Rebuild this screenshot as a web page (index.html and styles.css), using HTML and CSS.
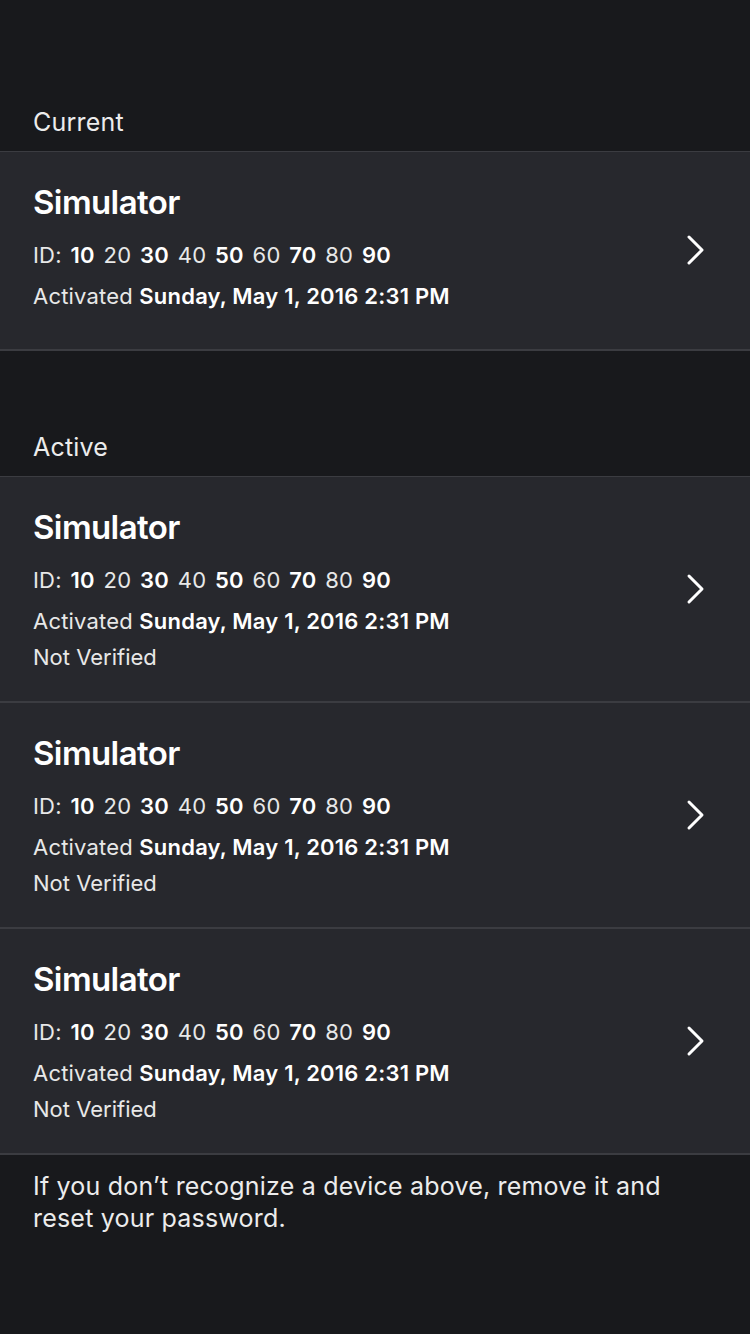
FILE: index.html
```html
<!DOCTYPE html>
<html>
<head>
<meta charset="utf-8">
<link rel="stylesheet" href="styles.css">
</head>
<body>
<div class="page">
  <section class="group group-current">
    <h2 class="group-title">Current</h2>
    <div class="list">
      <div class="card card-current">
        <div class="info">
          <div class="name">Simulator</div>
          <div class="line line-id">ID: <b>10</b> 20 <b>30</b> 40 <b>50</b> 60 <b>70</b> 80 <b>90</b></div>
          <div class="line">Activated <b>Sunday, May 1, 2016 2:31 PM</b></div>
        </div>
        <svg class="chev" width="20" height="32" viewBox="0 0 20 32"><path d="M3 3 L16 16 L3 29" fill="none" stroke="#fff" stroke-width="3" stroke-linecap="round" stroke-linejoin="round"/></svg>
      </div>
    </div>
  </section>

  <section class="group group-active">
    <h2 class="group-title">Active</h2>
    <div class="list">
      <div class="card">
        <div class="info">
          <div class="name">Simulator</div>
          <div class="line line-id">ID: <b>10</b> 20 <b>30</b> 40 <b>50</b> 60 <b>70</b> 80 <b>90</b></div>
          <div class="line">Activated <b>Sunday, May 1, 2016 2:31 PM</b></div>
          <div class="line status">Not Verified</div>
        </div>
        <svg class="chev" width="20" height="32" viewBox="0 0 20 32"><path d="M3 3 L16 16 L3 29" fill="none" stroke="#fff" stroke-width="3" stroke-linecap="round" stroke-linejoin="round"/></svg>
      </div>
      <div class="card">
        <div class="info">
          <div class="name">Simulator</div>
          <div class="line line-id">ID: <b>10</b> 20 <b>30</b> 40 <b>50</b> 60 <b>70</b> 80 <b>90</b></div>
          <div class="line">Activated <b>Sunday, May 1, 2016 2:31 PM</b></div>
          <div class="line status">Not Verified</div>
        </div>
        <svg class="chev" width="20" height="32" viewBox="0 0 20 32"><path d="M3 3 L16 16 L3 29" fill="none" stroke="#fff" stroke-width="3" stroke-linecap="round" stroke-linejoin="round"/></svg>
      </div>
      <div class="card">
        <div class="info">
          <div class="name">Simulator</div>
          <div class="line line-id">ID: <b>10</b> 20 <b>30</b> 40 <b>50</b> 60 <b>70</b> 80 <b>90</b></div>
          <div class="line">Activated <b>Sunday, May 1, 2016 2:31 PM</b></div>
          <div class="line status">Not Verified</div>
        </div>
        <svg class="chev" width="20" height="32" viewBox="0 0 20 32"><path d="M3 3 L16 16 L3 29" fill="none" stroke="#fff" stroke-width="3" stroke-linecap="round" stroke-linejoin="round"/></svg>
      </div>
    </div>
    <p class="footer">If you don’t recognize a device above, remove it and reset your password.</p>
  </section>
</div>
</body>
</html>
```

FILE: styles.css
```css
html, body {
  margin: 0;
  padding: 0;
  background: #18191c;
}
body {
  font-family: Inter, "Noto Sans", sans-serif;
  color: #ffffff;
  width: 750px;
  height: 1334px;
  overflow: hidden;
}
.page {
  display: flex;
  flex-direction: column;
}
.group-title {
  margin: 0;
  font-size: 25px;
  font-weight: 400;
  letter-spacing: 0.2px;
  line-height: 32px;
  color: #ececec;
  padding: 0 33px 13px;
}
.group-current {
  padding-top: 106px;
}
.group-active {
  padding-top: 80px;
}
.list {
  border-top: 1px solid #3b3c41;
}
.card {
  display: flex;
  align-items: center;
  justify-content: space-between;
  background: #27282d;
  border-bottom: 2px solid #3b3c41;
  padding: 28px 44px 29px 33px;
}
.card-current .info {
  padding-bottom: 9px;
}
.info {
  display: flex;
  flex-direction: column;
}
.name {
  font-size: 33px;
  font-weight: 600;
  line-height: 44px;
  letter-spacing: -0.6px;
  margin-bottom: 16px;
}
.line {
  font-size: 22px;
  line-height: 30px;
  font-weight: 400;
  letter-spacing: 0.2px;
  color: #e8e8e8;
}
.line b {
  font-weight: 600;
  color: #ffffff;
}
.line-id {
  margin-bottom: 11px;
  word-spacing: 2.4px;
}
.status {
  margin-top: 6px;
  letter-spacing: 0;
}
.chev {
  display: block;
  flex: none;
}
.footer {
  margin: 0;
  padding: 15px 60px 0 33px;
  font-size: 25px;
  letter-spacing: 0.2px;
  line-height: 32px;
  color: #ececec;
}
```
